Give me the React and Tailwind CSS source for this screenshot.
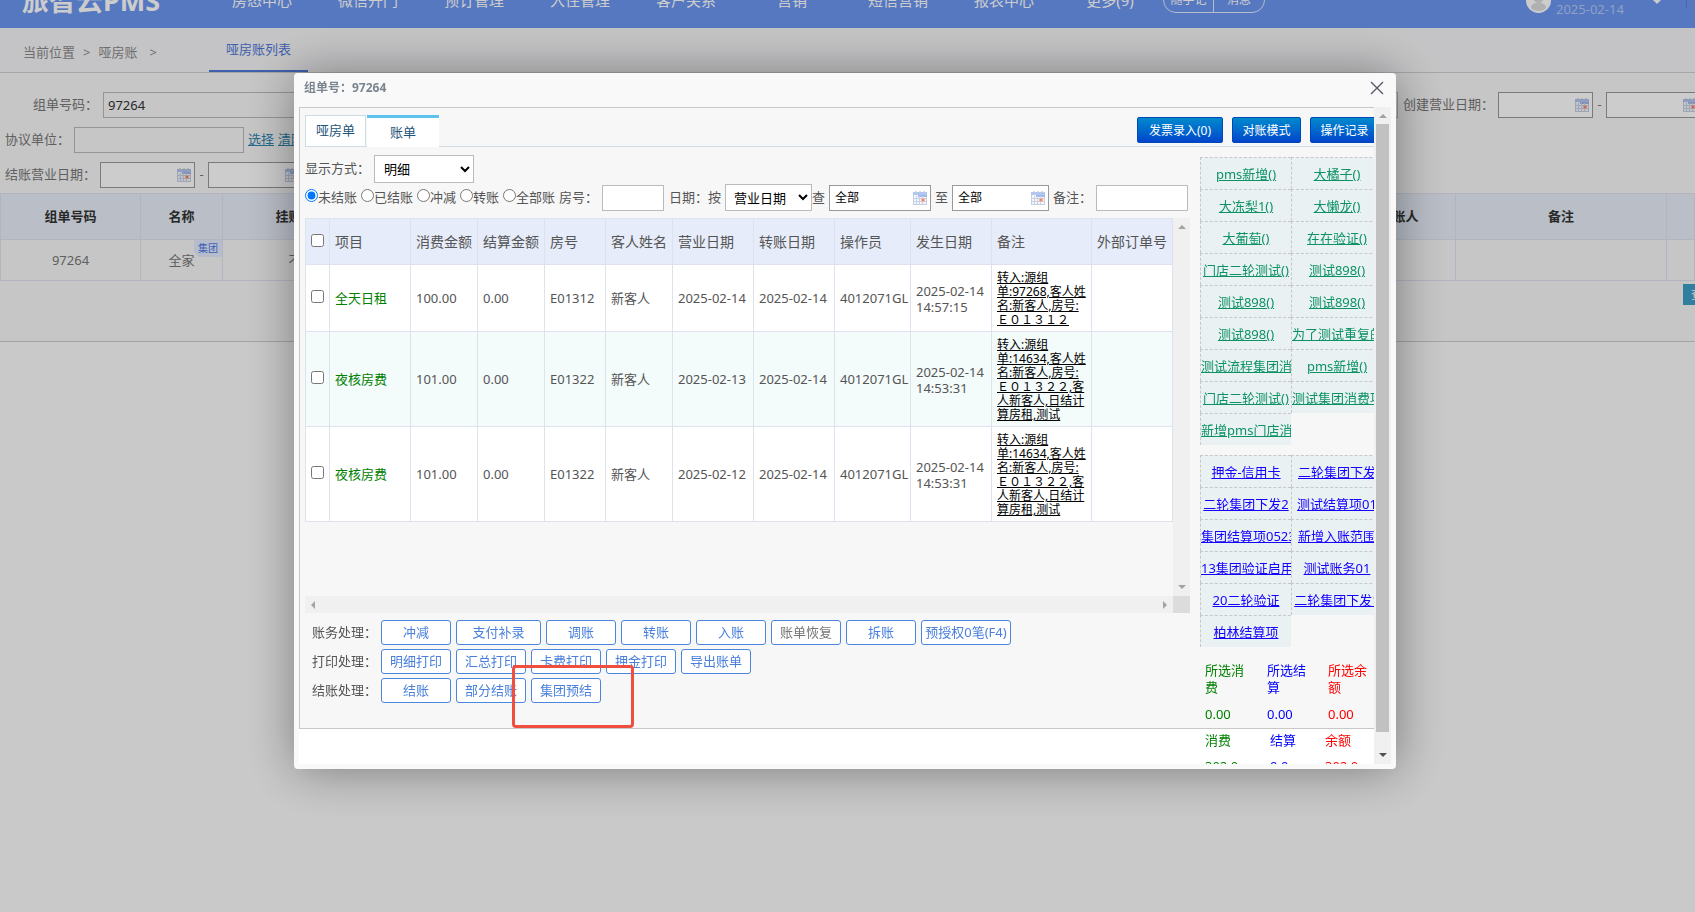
import React from 'react';

const NAV = ['房态中心', '微信开门', '预订管理', '入住管理', '客户关系', '营销', '短信营销', '报表中心', '更多(9)'];

const FILTERS = ['未结账', '已结账', '冲减', '转账', '全部账'];

const COLUMNS = ['项目', '消费金额', '结算金额', '房号', '客人姓名', '营业日期', '转账日期', '操作员', '发生日期', '备注', '外部订单号'];
const COL_WIDTHS = [24, 81, 67, 67, 61, 67, 81, 81, 76, 81, 100, 81];

const ROWS = [
  {
    item: '全天日租', amount: '100.00', settled: '0.00', room: 'E01312', guest: '新客人',
    date: '2025-02-14', moved: '2025-02-14', operator: '4012071GL', time: ['2025-02-14', '14:57:15'],
    remark: ['转入:源组', '单:97268,客人姓', '名:新客人,房号:', 'Ｅ０１３１２'],
    height: 'h-[67px]', bg: 'bg-white',
  },
  {
    item: '夜核房费', amount: '101.00', settled: '0.00', room: 'E01322', guest: '新客人',
    date: '2025-02-13', moved: '2025-02-14', operator: '4012071GL', time: ['2025-02-14', '14:53:31'],
    remark: ['转入:源组', '单:14634,客人姓', '名:新客人,房号:', 'Ｅ０１３２２,客', '人新客人,日结计', '算房租,测试'],
    height: 'h-[95px]', bg: 'bg-[#f4fbfb]',
  },
  {
    item: '夜核房费', amount: '101.00', settled: '0.00', room: 'E01322', guest: '新客人',
    date: '2025-02-12', moved: '2025-02-14', operator: '4012071GL', time: ['2025-02-14', '14:53:31'],
    remark: ['转入:源组', '单:14634,客人姓', '名:新客人,房号:', 'Ｅ０１３２２,客', '人新客人,日结计', '算房租,测试'],
    height: 'h-[95px]', bg: 'bg-white',
  },
];

const CONSUME_ITEMS = [
  'pms新增()', '大橘子()', '大冻梨1()', '大懒龙()', '大葡萄()', '在在验证()',
  '门店二轮测试()', '测试898()', '测试898()', '测试898()', '测试898()', '为了测试重复的()',
  '测试流程集团消费', 'pms新增()', '门店二轮测试()', '测试集团消费项()', '新增pms门店消费',
];

const SETTLE_ITEMS = [
  '押金-信用卡', '二轮集团下发', '二轮集团下发2', '测试结算项01', '集团结算项0523', '新增入账范围',
  '13集团验证启用', '测试账务01', '20二轮验证', '二轮集团下发1', '柏林结算项',
];

const ACTIONS = [
  {
    label: '账务处理：',
    buttons: [
      { text: '冲减' }, { text: '支付补录', width: 'w-[85px]' }, { text: '调账' }, { text: '转账' },
      { text: '入账' }, { text: '账单恢复', muted: true }, { text: '拆账' }, { text: '预授权0笔(F4)', width: 'w-[90px]' },
    ],
  },
  { label: '打印处理：', buttons: [{ text: '明细打印' }, { text: '汇总打印' }, { text: '卡费打印' }, { text: '押金打印' }, { text: '导出账单' }] },
  { label: '结账处理：', buttons: [{ text: '结账' }, { text: '部分结账' }, { text: '集团预结' }] },
];

function CalendarIcon() {
  return (
    <svg className="h-[14px] w-[14px] shrink-0" viewBox="0 0 14 14">
      <rect x="0.5" y="1.5" width="13" height="12" fill="#f4f6fb" stroke="#c6cfe0" />
      <rect x="0" y="1" width="14" height="3" fill="#b3c6ee" />
      <rect x="5" y="4" width="9" height="2" fill="#a3b8ea" />
      <path d="M2 0h2v1H2zM6 0h2v1H6zM10 0h2v1h-2z" fill="#e6d8d4" />
      <path d="M3.5 5v8M6.5 5v8M9.5 5v8M1 7.5h12M1 10.5h12" stroke="#c6d2e8" />
      <rect x="8" y="7" width="4" height="4" fill="#f0b8a8" />
      <rect x="9" y="8" width="2" height="2" fill="#e88a70" />
    </svg>
  );
}

function DateInput({ label, value = '', width = 'w-[95px]' }) {
  return (
    <span className={`flex h-[26px] shrink-0 items-center border border-[#999] bg-white pl-[5px] pr-[3px] ${width}`}>
      <input aria-label={label} defaultValue={value} className="w-full min-w-0 text-[12px] text-black outline-none" />
      <CalendarIcon />
    </span>
  );
}

function Arrow({ dir, dark }) {
  const paths = { up: 'M0 6h8L4 2z', down: 'M0 2h8L4 6z', left: 'M6 0v8L2 4z', right: 'M2 0v8l4-4z' };
  return (
    <svg className="h-2 w-2 shrink-0" viewBox="0 0 8 8">
      <path d={paths[dir]} fill={dark ? '#505050' : '#a3a3a3'} />
    </svg>
  );
}

function TopBar() {
  return (
    <header className="flex h-7 flex-col justify-end overflow-hidden bg-[#6b96f2] text-white">
      <div className="flex h-[56px] shrink-0 items-center">
        <div className="w-[209px] shrink-0 pl-[22px] text-[27px] font-bold leading-none whitespace-nowrap">旅智云PMS</div>
        <nav className="flex">
          {NAV.map(n => (
            <a key={n} href="#" className="w-[106px] text-center text-[15px] leading-5">{n}</a>
          ))}
        </nav>
        <div className="flex h-[26px] shrink-0 overflow-hidden rounded-full border border-white/80 text-[12px]">
          <button className="w-[50px] border-r border-white/80">随手记</button>
          <button className="w-[50px]">消息</button>
        </div>
        <div className="flex-1" />
        <svg className="h-[25px] w-[25px] shrink-0" viewBox="0 0 25 25">
          <circle cx="12.5" cy="12.5" r="12.5" fill="#fff" />
          <circle cx="12.5" cy="10" r="5" fill="#dcdcdc" />
          <path d="M5 20c0-7 15-7 15 0-3 4-12 4-15 0z" fill="#dcdcdc" />
        </svg>
        <div className="ml-[5px] w-[96px] text-[13px] leading-[18px] text-[#b4c8f8]">
          <div>管理员</div>
          <div>2025-02-14</div>
        </div>
        <svg className="h-[8px] w-[10px]" viewBox="0 0 10 8"><path d="M0 3h10L5 8z" fill="#fff" /></svg>
        <div className="ml-[24px] mr-[8px] h-4 w-px bg-[#5a7fd4]" />
      </div>
    </header>
  );
}

function ListPage() {
  const th = 'border border-[#dfe3f2] font-bold text-[#333]';
  const td = 'border border-[#dfe3f2] pt-[2px] text-center text-[#777]';
  return (
    <div className="text-[13px] text-[#777]">
      <TopBar />
      <div className="flex h-[45px] items-stretch border-b border-[#d0d0d0] bg-[#f6f6f8]">
        <div className="flex w-[209px] items-center gap-[8px] pl-[23px] pt-[6px] text-[#8a8a8a]">
          <span>当前位置</span>
          <span>&gt;</span>
          <span>哑房账</span>
          <span className="pl-[4px]">&gt;</span>
        </div>
        <a href="#" className="flex w-[99px] items-center justify-center border-b-2 border-[#4f78d8] pt-[2px] text-[#4f78d8]">哑房账列表</a>
      </div>

      <main className="border-b border-[#ccc] bg-[#f8f8f8] pt-[19px] pb-[36px]">
        <div className="flex flex-col gap-[9px]">
          <div className="-mr-[6px] flex h-[26px] items-center">
            <label htmlFor="group-no" className="ml-[33px] w-[70px] shrink-0">组单号码：</label>
            <input id="group-no" defaultValue="97264" className="h-[26px] w-[240px] border border-[#bbb] px-[4px] text-[#333]" />
            <div className="flex-1" />
            <input aria-label="名称" className="h-[26px] w-[170px] border border-[#bbb]" />
            <span className="ml-[5px] w-[95px] shrink-0">创建营业日期：</span>
            <DateInput label="创建开始日期" />
            <span className="w-[13px] text-center">-</span>
            <DateInput label="创建结束日期" />
          </div>
          <div className="flex h-[26px] items-center">
            <label htmlFor="unit" className="ml-[5px] w-[69px]">协议单位：</label>
            <input id="unit" className="h-[26px] w-[170px] border border-[#bbb]" />
            <a href="#" className="ml-[4px] text-[#2f86b0] underline">选择</a>
            <a href="#" className="ml-[4px] text-[#2f86b0] underline">清除</a>
          </div>
          <div className="flex h-[26px] items-center">
            <span className="ml-[5px] w-[95px]">结账营业日期：</span>
            <DateInput label="结账开始日期" />
            <span className="w-[13px] text-center">-</span>
            <DateInput label="结账结束日期" />
          </div>
        </div>

        <table className="mt-[5px] w-full table-fixed border-collapse">
          <colgroup>
            <col className="w-[140px]" />
            <col className="w-[82px]" />
            <col className="w-[158px]" />
            <col />
            <col className="w-[113px]" />
            <col className="w-[211px]" />
            <col className="w-[28px]" />
          </colgroup>
          <thead>
            <tr className="h-[46px] bg-[#e9eef9]">
              <th className={th}>组单号码</th>
              <th className={th}>名称</th>
              <th className={th}>挂账金额</th>
              <th className={th}></th>
              <th className={th}>挂账人</th>
              <th className={th}>备注</th>
              <th className={th}></th>
            </tr>
          </thead>
          <tbody>
            <tr className="h-[41px]">
              <td className={td}>97264</td>
              <td className={`${td} relative`}>
                全家
                <span className="absolute top-0 right-0 h-[17px] rounded-bl-lg bg-[#e3ebff] px-[4px] text-[10px] leading-4 text-[#4f78e8]">集团</span>
              </td>
              <td className={td}>不限</td>
              <td className={td}></td>
              <td className={td}></td>
              <td className={td}></td>
              <td className={td}></td>
            </tr>
          </tbody>
        </table>
        <div className="-mr-[38px] mt-[3px] flex justify-end">
          <button className="h-[21px] w-[50px] bg-[#3d9fc6] pl-[8px] text-left text-[12px] text-white">查询</button>
        </div>
      </main>
    </div>
  );
}

function FilterBar() {
  return (
    <div className="mt-px flex h-[27px] items-center whitespace-nowrap">
      {FILTERS.map((f, i) => (
        <label key={f} className="mr-[4px] flex items-center">
          <input type="radio" name="state" defaultChecked={i === 0} className="mb-[4px] h-[13px] w-[13px]" />
          {f}
        </label>
      ))}
      <label htmlFor="room" className="w-[43px]">房号：</label>
      <input id="room" className="h-[26px] w-[62px] border border-[#bbb] bg-white" />
      <label htmlFor="date-kind" className="ml-[5px] w-[56px]">日期：按</label>
      <select id="date-kind" className="h-[27px] w-[87px] border border-[#bbb] bg-white px-[4px] text-black">
        <option>营业日期</option>
      </select>
      <span className="w-[17px]">查</span>
      <DateInput label="开始日期" value="全部" width="w-[102px]" />
      <span className="w-[21px] text-center">至</span>
      <DateInput label="结束日期" value="全部" width="w-[97px]" />
      <label htmlFor="remark" className="ml-[4px] w-[43px]">备注：</label>
      <input id="remark" className="h-[26px] w-[92px] border border-[#bbb] bg-white" />
    </div>
  );
}

function BillTable() {
  const th = 'border border-[#dde2ee] pl-[5px] text-left font-normal';
  const td = 'border border-[#dde2ee] pt-[2px] pl-[5px] text-left';
  return (
    <div className="mt-[7px] flex flex-col">
      <div className="flex h-[378px]">
        <div className="min-w-0 flex-1">
          <table className="w-full table-fixed border-collapse whitespace-nowrap">
            <colgroup>
              {COL_WIDTHS.map((w, i) => <col key={i} style={{ width: w }} />)}
            </colgroup>
            <thead>
              <tr className="h-[46px] bg-[#e6ecf9] text-[14px]">
                <th className={th}>
                  <input type="checkbox" aria-label="全选" className="mb-[2px] block h-[13px] w-[13px]" />
                </th>
                {COLUMNS.map(c => <th key={c} className={th}>{c}</th>)}
              </tr>
            </thead>
            <tbody>
              {ROWS.map((r, i) => (
                <tr key={i} className={`${r.height} ${r.bg}`}>
                  <td className={td}>
                    <input type="checkbox" aria-label={`选择 ${r.item}`} className="mb-[6px] block h-[13px] w-[13px]" />
                  </td>
                  <td className={`${td} text-[#008000]`}>{r.item}</td>
                  <td className={td}>{r.amount}</td>
                  <td className={td}>{r.settled}</td>
                  <td className={td}>{r.room}</td>
                  <td className={td}>{r.guest}</td>
                  <td className={td}>{r.date}</td>
                  <td className={td}>{r.moved}</td>
                  <td className={td}>{r.operator}</td>
                  <td className={`${td} leading-4`}>
                    {r.time.map(t => <div key={t}>{t}</div>)}
                  </td>
                  <td className={`${td} text-[12px] leading-[14px] text-black`}>
                    {r.remark.map(t => <a key={t} href="#" className="block underline">{t}</a>)}
                  </td>
                  <td className={td}></td>
                </tr>
              ))}
            </tbody>
          </table>
        </div>
        <div className="flex w-[17px] flex-col items-center justify-between bg-[#f0f0f0] py-[5px]">
          <Arrow dir="up" />
          <Arrow dir="down" />
        </div>
      </div>
      <div className="flex h-[17px]">
        <div className="flex flex-1 items-center justify-between bg-[#f0f0f0] px-[4px]">
          <Arrow dir="left" />
          <Arrow dir="right" />
        </div>
        <div className="w-[17px] bg-[#dcdcdc]" />
      </div>
    </div>
  );
}

function ItemGrid({ items, color }) {
  return (
    <div className="grid grid-cols-2">
      {items.map((t, i) => (
        <div key={i} className="h-[32px] overflow-hidden border-t border-l border-dashed border-[#c8c8c8] bg-[#eaf1f3] text-center leading-[32px] whitespace-nowrap">
          <a href="#" className={`underline ${color}`}>{t}</a>
        </div>
      ))}
    </div>
  );
}

function Sidebar() {
  return (
    <aside className="w-[182px] shrink-0 pt-[10px]">
      <ItemGrid items={CONSUME_ITEMS} color="text-[#0c9264]" />
      <div className="mt-[10px]">
        <ItemGrid items={SETTLE_ITEMS} color="text-[#1400ff]" />
      </div>
      <dl className="mt-[15px] grid grid-cols-[62px_61px_46px] pl-[5px] leading-[17px]">
        <dt className="w-[40px] text-[#008000]">所选消费</dt>
        <dt className="w-[40px] text-[#0000ff]">所选结算</dt>
        <dt className="w-[40px] text-[#ff0000]">所选余额</dt>
        <dd className="mt-[10px] text-[#008000]">0.00</dd>
        <dd className="mt-[10px] text-[#0000ff]">0.00</dd>
        <dd className="mt-[10px] text-[#ff0000]">0.00</dd>
      </dl>
      <dl className="mt-[9px] grid grid-cols-[65px_55px_46px] gap-y-[9px] pl-[5px] leading-[17px]">
        <dt className="text-[#008000]">消费</dt>
        <dt className="text-[#0000ff]">结算</dt>
        <dt className="text-[#ff0000]">余额</dt>
        <dd className="text-[#008000]">302.0</dd>
        <dd className="text-[#0000ff]">0.0</dd>
        <dd className="text-[#ff0000]">302.0</dd>
      </dl>
    </aside>
  );
}

function ActionRows() {
  return (
    <div className="mt-[7px] flex flex-col gap-[4px] pl-[7px]">
      {ACTIONS.map(row => (
        <div key={row.label} className="flex h-[25px] items-center gap-[5px]">
          <span className="w-[64px] shrink-0 whitespace-nowrap">{row.label}</span>
          {row.buttons.map(b => (
            <button
              key={b.text}
              className={`h-[25px] rounded-[3px] border border-[#4a86dc] bg-white pt-px whitespace-nowrap ${b.width ?? 'w-[70px]'} ${b.muted ? 'text-[#777]' : 'text-[#4a80dc]'}`}
            >
              {b.text}
            </button>
          ))}
        </div>
      ))}
    </div>
  );
}

function BillPanel() {
  const blueBtn = 'h-[26px] rounded-[2px] border border-[#0048b8] bg-linear-to-b from-[#0088cc] to-[#0044cc] pt-[2px] text-[12px] text-white whitespace-nowrap';
  return (
    <div className="relative -mr-[8px] h-[622px] border-t border-b border-l border-[#c8c8c8] bg-[#f7f7f7] pl-[5px]">
      <div className="mt-[7px] flex h-[32px] border-b border-[#d0dce4] pr-[3px]">
        <button className="h-[32px] w-[61px] border border-[#d0dce4] bg-white text-[#1f5578]">哑房单</button>
        <button className="ml-px h-[32px] w-[72px] border-t-[3px] border-[#5cc3ee] bg-white pt-px text-[#1f5578]">账单</button>
        <div className="flex flex-1 items-start justify-end gap-[9px] pt-[2px]">
          <button className={`${blueBtn} w-[86px]`}>发票录入(0)</button>
          <button className={`${blueBtn} w-[69px]`}>对账模式</button>
          <button className={`${blueBtn} w-[69px]`}>操作记录</button>
        </div>
      </div>
      <div className="flex">
        <div className="min-w-0 flex-1 pr-[10px]">
          <div className="mt-[8px] flex h-[28px] items-center">
            <label htmlFor="mode" className="w-[69px]">显示方式：</label>
            <select id="mode" className="h-[28px] w-[100px] border border-[#bbb] bg-white px-[5px] text-black">
              <option>明细</option>
            </select>
          </div>
          <FilterBar />
          <BillTable />
          <ActionRows />
        </div>
        <Sidebar />
      </div>
      {/* highlight around the group pre-settlement button */}
      <div className="pointer-events-none absolute top-[557px] left-[212px] h-[63px] w-[122px] rounded-[4px] border-[3px] border-[#f04e3e]" />
    </div>
  );
}

function BillDialog() {
  return (
    <div className="fixed inset-0 flex bg-black/20 pt-[73px] pr-[299px] pb-[143px] pl-[294px]">
      <section
        role="dialog"
        aria-label="组单号：97264"
        className="flex min-w-0 flex-1 flex-col rounded-[4px] bg-[#f9f9fa] px-[5px] pb-[5px] text-[13px] text-[#555] shadow-[1px_1px_50px_rgba(0,0,0,0.4)]"
      >
        <div className="flex h-[34px] shrink-0 items-center justify-between pr-[7px] pb-[4px] pl-[5px]">
          <h2 className="text-[12px] font-bold text-[#7b8590]">组单号：97264</h2>
          <button aria-label="关闭" className="h-[14px] w-[14px]">
            <svg viewBox="0 0 14 14" className="h-full w-full">
              <path d="M1 1l12 12M13 1L1 13" stroke="#555b66" strokeWidth="1.4" />
            </svg>
          </button>
        </div>
        <div className="flex min-h-0 flex-1 bg-white">
          <div className="min-w-0 flex-1 overflow-hidden">
            <BillPanel />
          </div>
          <div className="flex w-[17px] shrink-0 flex-col items-center bg-[#f0f0f0] pt-[5px] pb-[5px]">
            <Arrow dir="up" />
            <div className="mt-[4px] mb-[19px] w-[13px] flex-1 bg-[#c1c1c1]" />
            <Arrow dir="down" dark />
          </div>
        </div>
      </section>
    </div>
  );
}

export default function App() {
  return (
    <div className="h-screen overflow-hidden bg-[#fcfcfc] font-['Noto_Sans','Noto_Sans_CJK_SC',sans-serif]">
      <ListPage />
      <BillDialog />
    </div>
  );
}
